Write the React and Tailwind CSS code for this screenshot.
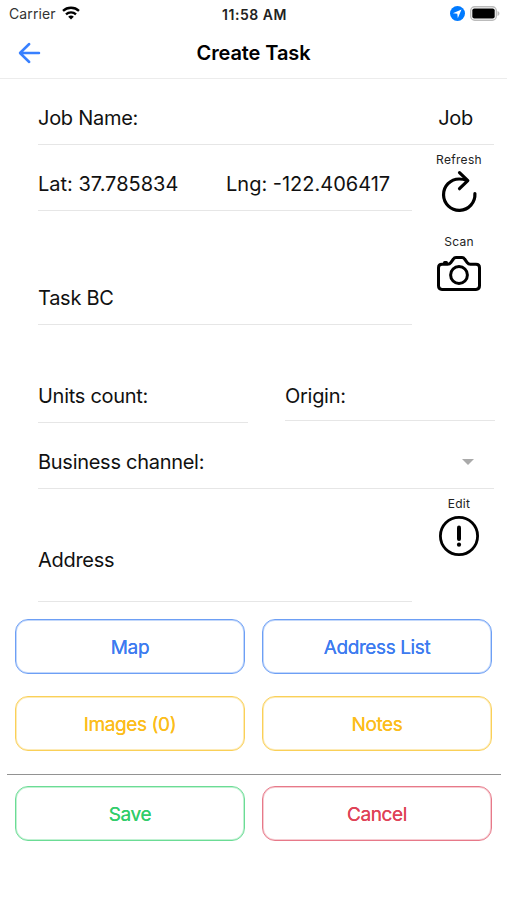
import React from "react";

const Field = ({ children, className = "", pad = "pb-[14px]" }) => (
  <div className={`flex items-end border-b border-[#e6e6e6] ${pad} ${className}`}>{children}</div>
);

const IconButton = ({ label, className = "", children }) => (
  <button type="button" className={`flex w-[94px] flex-col items-center ${className}`}>
    <span className="pt-px text-[12px] leading-[15px] tracking-[0.3px] text-[#222]">{label}</span>
    {children}
  </button>
);

const OutlineButton = ({ label, className }) => (
  <button
    type="button"
    className={`h-[55px] rounded-[13px] border pt-[2px] text-[19px] leading-6 tracking-[-0.4px] [text-shadow:0_0_0.5px_currentColor] ${className}`}
  >
    {label}
  </button>
);

const StatusBar = () => (
  <div className="flex h-[27px] items-center justify-between pl-[9px] pr-[7px]">
    <div className="flex w-[120px] items-center gap-[6px]">
      <span className="text-[14px] tracking-[0.1px] text-[#333]">Carrier</span>
      <svg className="-mt-[2px]" width="18" height="14" viewBox="0 0 18 14" fill="none" stroke="#000" strokeWidth="2.3">
        <path d="M1 4.9C5.500.7 12.500.7 17 4.900" />
        <path d="M4 8.300c2.800-2.700 7.200-2.700 10 0" />
        <path d="M6.200 10.700c1.600-1.500 4-1.500 5.600 0L9 13.600z" fill="#000" stroke="none" />
      </svg>
    </div>
    <span className="pt-px text-[14px] font-semibold tracking-[0.55px] text-[#222]">11:58 AM</span>
    <div className="flex w-[120px] items-center justify-end gap-[5px]">
      <svg width="15" height="15" viewBox="0 0 15 15">
        <circle cx="7.5" cy="7.5" r="7.5" fill="#007aff" />
        <path d="M11.5 3.5 2.9 7.3l4.4.5.5 4.4z" fill="#fff" />
      </svg>
      <svg width="30" height="15" viewBox="0 0 30 15">
        <rect x=".7" y=".7" width="25.6" height="13.6" rx="4" fill="#fff" stroke="#bbb" strokeWidth="1.4" />
        <rect x="2.3" y="2.5" width="22.4" height="10" rx="2" fill="#000" />
        <path d="M27.5 5c2.6.8 2.6 4.2 0 5z" fill="#bbb" />
      </svg>
    </div>
  </div>
);

const App = () => {
  return (
    <div className="min-h-[900px] w-[507px] bg-white font-['Inter',sans-serif] text-[#111]">
      <StatusBar />

      <header className="flex h-[52px] items-center justify-between border-b border-[#ececec] px-[18px]">
        <svg width="23" height="22" viewBox="0 0 23 22" fill="none" stroke="#3880ff" strokeWidth="2.5" strokeLinecap="round" strokeLinejoin="round">
          <path d="M11.2 2 2 11l9.2 9M2.5 11H21" />
        </svg>
        <h1 className="text-[20px] font-semibold tracking-[-0.1px] text-black">Create Task</h1>
        <div className="w-[23px]" />
      </header>

      <main className="text-[20px] leading-6 tracking-[-0.28px]">
        <Field className="ml-[38px] mr-[13px] h-[66px] justify-between pr-[21px]">
          <span>Job Name:</span>
          <span>Job</span>
        </Field>

        <div className="flex pl-[38px]">
          <div className="w-[374px]">
            <Field className="h-[66px] tracking-normal">
              <span className="w-[188px]">Lat: 37.785834</span>
              <span>Lng: -122.406417</span>
            </Field>
            <Field className="h-[114px]">Task BC</Field>
          </div>
          <div className="flex flex-col pt-[6px]">
            <IconButton label="Refresh" className="h-[82px]">
              <svg className="mt-[3px]" width="44" height="44" viewBox="0 0 44 44" fill="none" stroke="#000" strokeWidth="3.2" strokeLinecap="round" strokeLinejoin="round">
                <path d="M29.5 10.4C27 9.2 24.600 9 22.200 9A15.700 15.700 0 1 0 37.900 23.700" />
                <path d="m22.500 2.700 8.300 8-8.300 8" />
              </svg>
            </IconButton>
            <IconButton label="Scan">
              <svg className="mt-[7px]" width="44" height="35" viewBox="0 0 44 35" fill="none" stroke="#000" strokeWidth="3" strokeLinejoin="round">
                <path d="M13.8 6.6 16.4 3Q17.3 1.6 19 1.6h6q1.7 0 2.6 1.4l2.6 3.6q1.2 1.7 3.2 1.7H39q3.5 0 3.5 3.4v18.1q0 3.6-3.5 3.6H5q-3.5 0-3.500-3.600V11.700Q1.500 8.300 5 8.300h5.600q2 0 3.200-1.700z" />
                <circle cx="22" cy="19" r="8.4" />
                <path d="M7.500 6.500h2" strokeLinecap="round" />
              </svg>
            </IconButton>
          </div>
        </div>

        <div className="mt-8 flex items-start gap-[37px] pl-[38px]">
          <Field className="h-[66px] w-[210px]">Units count:</Field>
          <Field className="h-[64px] w-[210px]" pad="pb-[12px]">Origin:</Field>
        </div>

        <Field className="ml-[38px] mr-[13px] h-[66px] justify-between pr-[20px]">
          <span>Business channel:</span>
          <svg className="mb-[9px]" width="12" height="6" viewBox="0 0 12 6" fill="#aaa">
            <path d="M0 0h12L6 6z" />
          </svg>
        </Field>

        <div className="flex pl-[38px]">
          <Field className="h-[113px] w-[374px]" pad="pb-[29px]">Address</Field>
          <IconButton label="Edit" className="pt-[6px]">
            <svg className="mt-[5px]" width="40" height="40" viewBox="0 0 40 40">
              <circle cx="20" cy="20" r="18.600" fill="none" stroke="#000" strokeWidth="2.8" />
              <path d="M20 11.500v11.500" stroke="#000" strokeWidth="4" strokeLinecap="round" />
              <circle cx="20" cy="28.700" r="2.100" />
            </svg>
          </IconButton>
        </div>

        <div className="mt-[17px] grid grid-cols-2 gap-x-[17px] gap-y-[22px] px-[15px]">
          <OutlineButton label="Map" className="border-[#6d9ff5] text-[#3d7bf0] shadow-[inset_0_0_0_1px_#c3d8fb]" />
          <OutlineButton label="Address List" className="border-[#6d9ff5] text-[#3d7bf0] shadow-[inset_0_0_0_1px_#c3d8fb]" />
          <OutlineButton label="Images (0)" className="border-[#fad058] text-[#fcbd1c] shadow-[inset_0_0_0_1px_#fdebb8]" />
          <OutlineButton label="Notes" className="border-[#fad058] text-[#fcbd1c] shadow-[inset_0_0_0_1px_#fdebb8]" />
        </div>

        <hr className="ml-[7px] mr-[6px] mt-[23px] border-[#929292]" />

        <div className="mt-[11px] grid grid-cols-2 gap-x-[17px] px-[15px]">
          <OutlineButton label="Save" className="border-[#6bdc95] text-[#32cd6b] shadow-[inset_0_0_0_1px_#c2f1d3]" />
          <OutlineButton label="Cancel" className="border-[#e77989] text-[#df4358] shadow-[inset_0_0_0_1px_#f6ccd2]" />
        </div>
      </main>
    </div>
  );
};

export default App;
